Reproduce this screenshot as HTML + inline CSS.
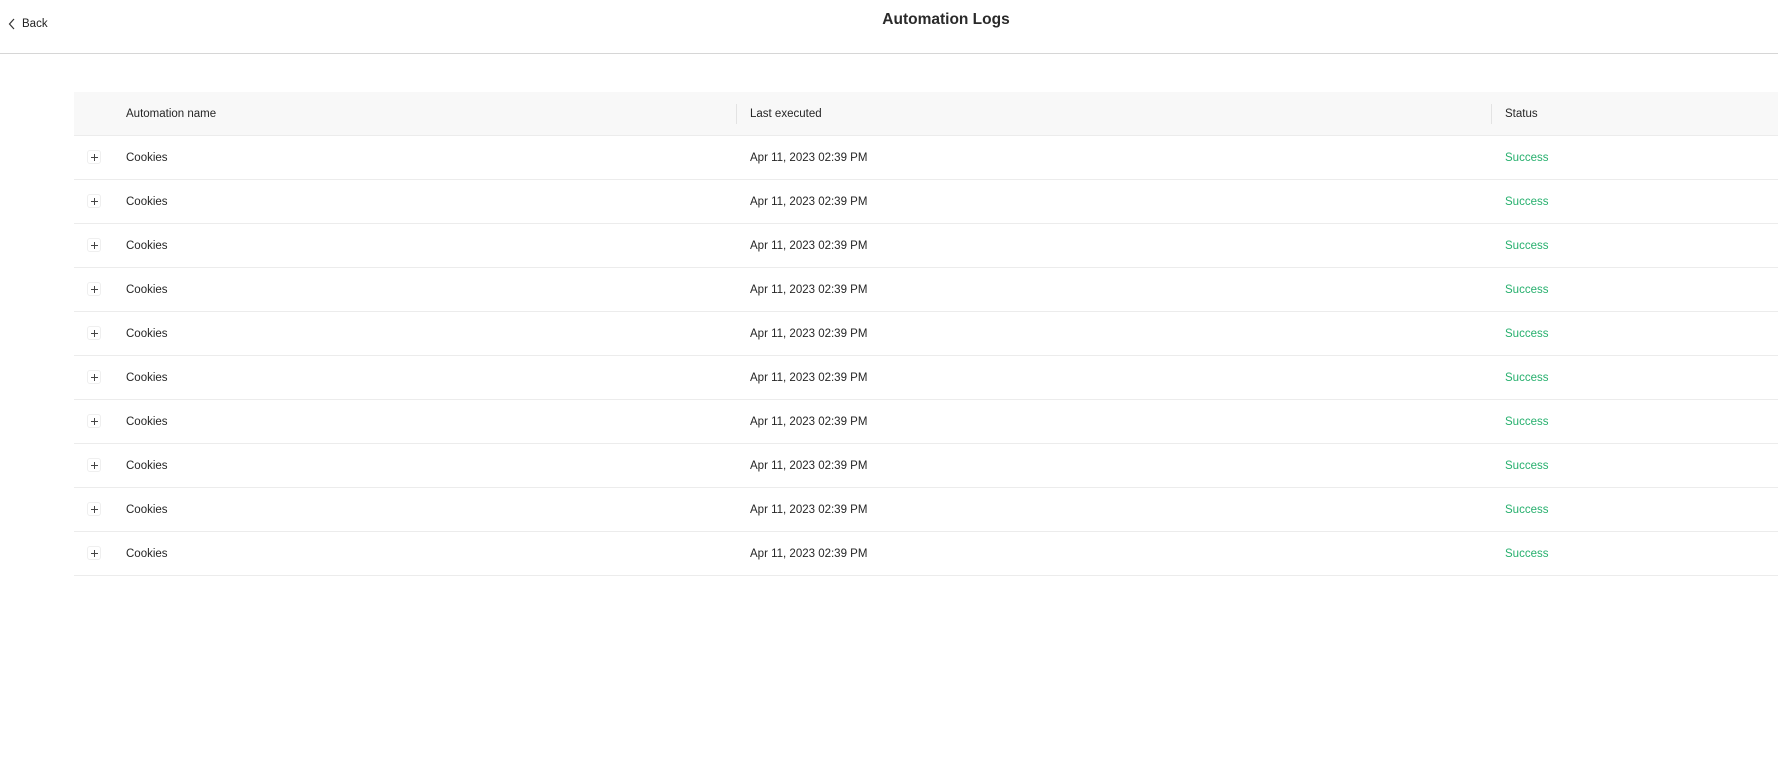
<!DOCTYPE html>
<html><head><meta charset="utf-8"><style>
*{margin:0;padding:0;box-sizing:border-box}
body{width:1778px;height:762px;background:#fff;font-family:"Liberation Sans",sans-serif;color:#262626;position:relative;overflow:hidden}
.top{position:absolute;left:0;top:0;width:1778px;height:54px;border-bottom:1px solid #d6d6d6}
.back{position:absolute;left:8px;top:18px;font-size:11.5px;color:#222;display:flex;align-items:center}
.back svg{margin-right:6px}
.title{position:absolute;left:0;top:11px;font-size:15.5px;font-weight:bold;color:#2a2a2a;width:100%;text-align:center;padding-left:114px}
.tbl{position:absolute;left:74px;top:92px;width:1704px}
.hd{height:44px;background:#f8f8f8;border-bottom:1px solid #ececec;position:relative;font-size:11.5px}
.row{height:44px;border-bottom:1px solid #ececec;position:relative;font-size:11.5px}
.c1{position:absolute;left:52px;top:0;line-height:45px}
.c2{position:absolute;left:676px;top:0;line-height:45px}
.c3{position:absolute;left:1431px;top:0;line-height:45px}
.ok{color:#27b06e}
.sep{position:absolute;top:12px;height:20px;width:1px;background:#e3e3e3}
.plus{position:absolute;left:13px;top:14px;width:14px;height:14px;border:1px solid #efefef;border-radius:3px}
.plus:before{content:"";position:absolute;left:3px;top:6px;width:7px;height:1px;background:#444}
.plus:after{content:"";position:absolute;left:6px;top:3px;width:1px;height:7px;background:#444}
</style></head><body>
<div class="top">
<div class="back"><svg width="8" height="12" viewBox="0 0 8 12"><path d="M6 1L1.5 6 6 11" fill="none" stroke="#333" stroke-width="1.2"/></svg>Back</div>
<div class="title">Automation Logs</div>
</div>
<div class="tbl">
<div class="hd"><span class="c1">Automation name</span><div class="sep" style="left:662px"></div><span class="c2">Last executed</span><div class="sep" style="left:1417px"></div><span class="c3">Status</span></div>
<div class="row"><div class="plus"></div><span class="c1">Cookies</span><span class="c2">Apr 11, 2023 02:39 PM</span><span class="c3 ok">Success</span></div>
<div class="row"><div class="plus"></div><span class="c1">Cookies</span><span class="c2">Apr 11, 2023 02:39 PM</span><span class="c3 ok">Success</span></div>
<div class="row"><div class="plus"></div><span class="c1">Cookies</span><span class="c2">Apr 11, 2023 02:39 PM</span><span class="c3 ok">Success</span></div>
<div class="row"><div class="plus"></div><span class="c1">Cookies</span><span class="c2">Apr 11, 2023 02:39 PM</span><span class="c3 ok">Success</span></div>
<div class="row"><div class="plus"></div><span class="c1">Cookies</span><span class="c2">Apr 11, 2023 02:39 PM</span><span class="c3 ok">Success</span></div>
<div class="row"><div class="plus"></div><span class="c1">Cookies</span><span class="c2">Apr 11, 2023 02:39 PM</span><span class="c3 ok">Success</span></div>
<div class="row"><div class="plus"></div><span class="c1">Cookies</span><span class="c2">Apr 11, 2023 02:39 PM</span><span class="c3 ok">Success</span></div>
<div class="row"><div class="plus"></div><span class="c1">Cookies</span><span class="c2">Apr 11, 2023 02:39 PM</span><span class="c3 ok">Success</span></div>
<div class="row"><div class="plus"></div><span class="c1">Cookies</span><span class="c2">Apr 11, 2023 02:39 PM</span><span class="c3 ok">Success</span></div>
<div class="row"><div class="plus"></div><span class="c1">Cookies</span><span class="c2">Apr 11, 2023 02:39 PM</span><span class="c3 ok">Success</span></div>
</div>
</body></html>
